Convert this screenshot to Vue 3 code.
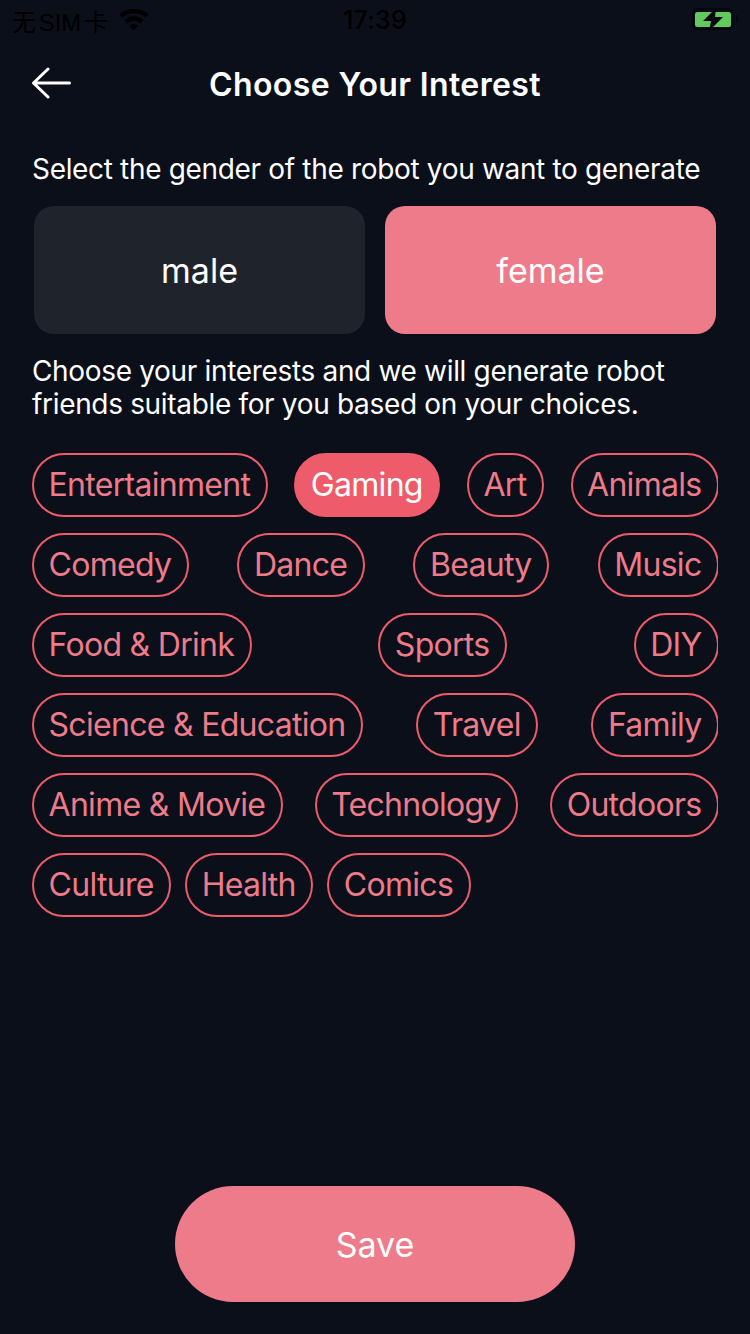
<script setup>
const rows = [
  ['Entertainment', 'Gaming', 'Art', 'Animals'],
  ['Comedy', 'Dance', 'Beauty', 'Music'],
  ['Food & Drink', 'Sports', 'DIY'],
  ['Science & Education', 'Travel', 'Family'],
  ['Anime & Movie', 'Technology', 'Outdoors'],
  ['Culture', 'Health', 'Comics'],
]
const selected = 'Gaming'
</script>

<template>
  <div class="page">
    <div class="status-bar">
      <div class="status-left">
        <span class="carrier">无 SIM 卡</span>
        <svg class="wifi" width="30" height="22" viewBox="0 0 30 22">
          <path d="M15 21.5 10.6 16.6a6.6 6.6 0 0 1 8.8 0z" fill="#000" />
          <path d="M8.4 14.2 5.5 11a14 14 0 0 1 19 0l-2.9 3.200a9.800 9.800 0 0 0-13.200 0z" fill="#000" />
          <path d="M3.400 8.600.5 5.400a21.500 21.500 0 0 1 29 0l-2.900 3.200a17.300 17.300 0 0 0-23.200 0z" fill="#000" />
        </svg>
      </div>
      <span class="time">17:39</span>
      <svg class="battery" width="52" height="24" viewBox="0 0 52 24">
        <rect x="3" y="1" width="40" height="20" rx="5" fill="none" stroke="#04070d" stroke-width="2" />
        <rect x="46" y="7" width="2" height="7" rx="1" fill="#04070d" />
        <rect x="5" y="4" width="36" height="15" rx="2.500" fill="#63c95f" />
        <path d="M26 0 13 13h8l-2 10 14-14h-8z" fill="#04070d" />
      </svg>
    </div>

    <header class="nav">
      <svg class="back" width="40" height="32" viewBox="0 0 40 32">
        <path d="M17 2 2.500 16 17 30M3 16h35.500" fill="none" stroke="#fff" stroke-width="3" stroke-linecap="round" stroke-linejoin="round" />
      </svg>
      <h1 class="title">Choose Your Interest</h1>
    </header>

    <p class="label first">Select the gender of the robot you want to generate</p>
    <div class="genders">
      <button class="gender">male</button>
      <button class="gender active">female</button>
    </div>

    <p class="label second">Choose your interests and we will generate robot friends suitable for you based on your choices.</p>

    <div class="tags">
      <div v-for="(row, i) in rows" :key="i" class="tag-row" :class="{ last: i === rows.length - 1 }">
        <span
          v-for="tag in row"
          :key="tag"
          class="tag"
          :class="{ selected: tag === selected }"
        >{{ tag }}</span>
      </div>
    </div>

    <button class="save">Save</button>
  </div>
</template>

<style scoped>
.page {
  width: 750px;
  height: 1334px;
  background: #0a0f1a;
  font-family: Inter, "Noto Sans CJK SC", sans-serif;
  display: flex;
  flex-direction: column;
  overflow: hidden;
}

.status-bar {
  height: 40px;
  flex-shrink: 0;
  display: grid;
  grid-template-columns: 1fr auto 1fr;
  align-items: center;
  padding: 0 8px;
  color: #000;
  font-size: 24px;
}

.status-left {
  display: flex;
  align-items: center;
  gap: 11px;
  padding-left: 4px;
}

.carrier {
  font-family: "Liberation Sans", "Noto Sans CJK SC", sans-serif;
  word-spacing: -4px;
}

.time {
  font-size: 25px;
  font-weight: 500;
  letter-spacing: 0.2px;
}

.battery {
  justify-self: end;
}

.nav {
  height: 88px;
  position: relative;
  display: flex;
  align-items: center;
  justify-content: center;
}

.back {
  position: absolute;
  left: 31px;
  top: 27px;
}

.title {
  margin: 0;
  color: #fff;
  font-size: 32px;
  font-weight: 600;
  letter-spacing: 0.38px;
}

.label {
  margin: 0;
  color: #fff;
  font-size: 28px;
  line-height: 33px;
  padding: 0 32px;
  letter-spacing: -0.33px;
}

.first {
  margin-top: 25px;
}

.genders {
  display: flex;
  justify-content: space-between;
  margin: 20px 34px 0;
}

.gender {
  width: 331px;
  height: 128px;
  border: 0;
  border-radius: 20px;
  background: #1f232c;
  color: #fff;
  font-family: inherit;
  font-size: 34px;
}

.gender.active {
  background: #ee7b89;
}

.second {
  margin-top: 21px;
}

.tags {
  width: 686px;
  margin: 32px 0 0 32px;
  display: flex;
  flex-direction: column;
  gap: 16px;
  overflow: hidden;
}

.tag-row {
  width: 687px;
  display: flex;
  justify-content: space-between;
}

.tag-row.last {
  justify-content: flex-start;
  gap: 14px;
}

.tag {
  height: 64px;
  box-sizing: border-box;
  padding: 0 15.500px 0 14.500px;
  border: 2px solid #ee5c6c;
  border-radius: 32px;
  color: #ee7b89;
  font-size: 32px;
  line-height: 60px;
  letter-spacing: -0.7px;
  white-space: nowrap;
}

.tag.selected {
  background: #ee5c6c;
  color: #fff;
}

.save {
  align-self: center;
  width: 400px;
  height: 116px;
  margin-top: auto;
  margin-bottom: 32px;
  border: 0;
  border-radius: 58px;
  background: #ee7b89;
  color: #fff;
  font-family: inherit;
  font-size: 34px;
}
</style>
